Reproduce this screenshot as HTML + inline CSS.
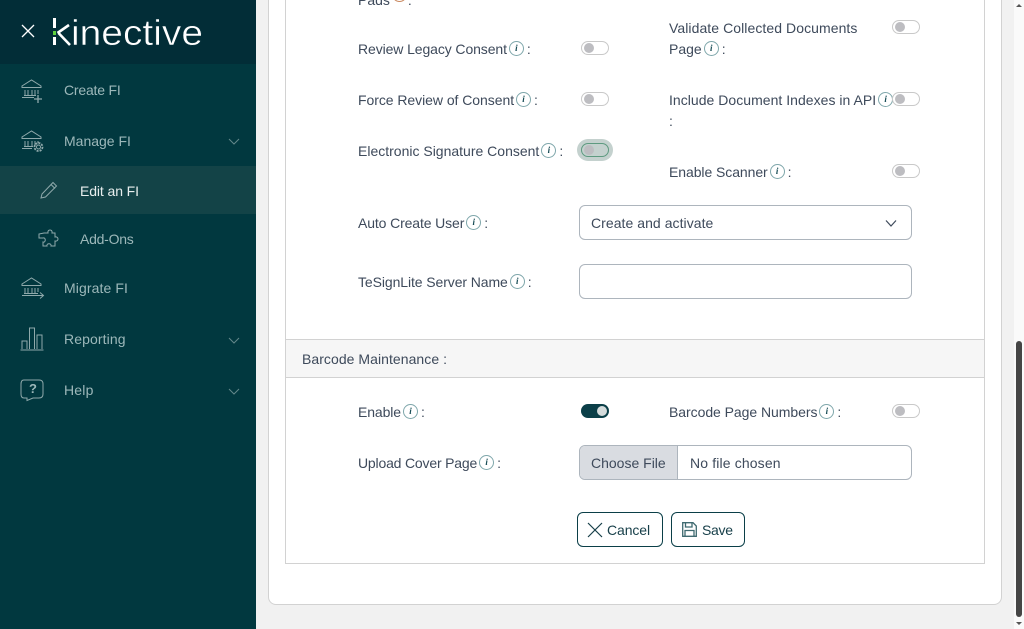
<!DOCTYPE html>
<html><head><meta charset="utf-8"><style>
*{box-sizing:border-box}
html,body{margin:0;padding:0;width:1024px;height:629px;overflow:hidden;background:#f1f1f1;font-family:"Liberation Sans",sans-serif}
.a{position:absolute}
#side{left:0;top:0;width:256px;height:629px;background:#01383f}
#head{left:0;top:0;width:256px;height:64px;background:#022d37}
#act{left:0;top:166px;width:256px;height:48px;background:#134347}
.m{position:absolute;font-size:14px;line-height:20px;color:#9db8ba;white-space:nowrap}
.t{position:absolute;font-size:14px;line-height:20px;color:#3e4a5b;white-space:nowrap}
.i{display:inline-block;position:relative;top:-2px;width:15px;height:15px;border:1px solid #7fa7ab;border-radius:50%;font:italic bold 9px/13px "Liberation Serif",serif;letter-spacing:0;color:#174c55;text-align:center;vertical-align:1px;margin:0 3px 0 2px}
.s{position:absolute;width:28px;height:14px;border:1px solid #c9c9c9;border-radius:7px;background:#fff}
.s:after{content:"";position:absolute;left:2px;top:1px;width:10px;height:10px;border-radius:50%;background:#bdbdc1}
.box{position:absolute;left:579px;width:333px;height:35px;border:1px solid #adb5bd;border-radius:6px;background:#fff}
.b{position:absolute;top:512px;height:35px;border:1px solid #0b3f48;border-radius:6px;background:#fff;font-size:14px;line-height:33px;color:#173f49}
svg{position:absolute;overflow:visible}
svg.ic *{fill:none;stroke:#8fa9ab;stroke-width:1}
</style></head><body>
<div class="a" id="side"></div><div class="a" id="head"></div><div class="a" id="act"></div>
<svg style="left:0;top:0" width="256" height="64">
<path d="M22 25L34 37M34 25L22 37" stroke="#fff" stroke-width="1.300" fill="none"/>
<text x="71" y="45" font-family="Liberation Sans" font-size="36" fill="#fff" stroke="#022d37" stroke-width=".5" textLength="132" lengthAdjust="spacingAndGlyphs">inective</text>
<rect x="53" y="18" width="3" height="10" fill="#fff"/><rect x="53" y="31" width="3" height="4" fill="#5fd13e"/><rect x="53" y="37" width="3" height="8" fill="#fff"/>
<path d="M57.500 33L69 25M58.500 33L70 45" stroke="#fff" stroke-width="2.600" fill="none"/>
</svg>
<svg class="ic" style="left:0;top:0" width="256" height="420">
<path d="M22 86L31.500 80L41 86V87.500H22ZM25 90V95M28 90V95M32 90V95M35 90V95M38 90V94M24 95.500H36M22 97.500H34"/><path d="M38 95V103M34 99H42" style="stroke-width:1.300"/>
<path d="M22 137L31.500 131L41 137V138.500H22ZM25 141V146M28 141V146M32 141V146M35 141V146M38 141V143M24 146.500H33M22 148.500H32"/><circle cx="38.500" cy="147" r="2"/><circle cx="38.500" cy="147" r="4" stroke-dasharray="2 1.100" style="stroke-width:1.800"/>
<path d="M42 194L53 182.500L56.500 186L45.500 197L41 198ZM51 184.500L55 188.500"/>
<path d="M44 233H48C47 229 53 229 52 233H55V237C59 236 59 242 55 241V246H51C52 243 46 243 47 246H43V242C46 243 46 237 43 238H39V234Z" transform="translate(0 0)"/>
<path d="M22 284L31.500 278L41 284V285.500H22ZM25 288V293M28 288V293M32 288V293M35 288V293M38 288V292M24 293.500H38M22 295.500H43M40 292.500L43.500 295.500L40 298.500"/>
<path d="M22 349V341H27V349M29.500 349V328H34.500V349M37 349V335H42V349M20.500 350H43.500"/>
<path d="M24 380H39Q43 380 43 384V394Q43 398 39 398H33L27 400.500V398H24Q21 398 21 394V384Q21 380 24 380Z"/>
<path d="M229 139L234 144L239 139M229 338L234 343L239 338M229 389L234 394L239 389" opacity=".7"/>
</svg>
<span class="a" style="left:29px;top:381px;font-size:13px;font-weight:bold;color:#9db8ba;line-height:15px">?</span>
<span class="m" style="left:64px;top:80px;letter-spacing:-.2px">Create FI</span>
<span class="m" style="left:64px;top:131px">Manage FI</span>
<span class="m" style="left:80px;top:181px;color:#e8eeee;letter-spacing:-.1px">Edit an FI</span>
<span class="m" style="left:80px;top:229px;letter-spacing:-.25px">Add-Ons</span>
<span class="m" style="left:64px;top:278px;letter-spacing:.1px">Migrate FI</span>
<span class="m" style="left:64px;top:329px;letter-spacing:.1px">Reporting</span>
<span class="m" style="left:64px;top:380px;letter-spacing:.2px">Help</span>

<div class="a" style="left:268px;top:-20px;width:734px;height:625px;background:#fff;border:1px solid #d2d2d2;border-radius:8px"></div>
<div class="a" style="left:285px;top:-20px;width:700px;height:584px;border:1px solid #d2d2d2;background:#fff"></div>
<div class="a" style="left:285px;top:339px;width:700px;height:39px;border:1px solid #d2d2d2;border-width:1px;background:#f6f6f6"></div>
<span class="t" style="left:302px;top:349px;letter-spacing:.05px">Barcode Maintenance :</span>

<span class="t" style="left:358px;top:-11px">Pads<span class="i" style="border-color:#c9885f;margin-right:1px"></span>:</span>
<span class="t" style="left:358px;top:39px;letter-spacing:-.1px">Review Legacy Consent<span class="i">i</span>:</span>
<span class="t" style="left:358px;top:90px;letter-spacing:-.05px">Force Review of Consent<span class="i">i</span>:</span>
<span class="t" style="left:358px;top:141px">Electronic Signature Consent<span class="i">i</span>:</span>
<span class="t" style="left:358px;top:213px;letter-spacing:-.12px">Auto Create User<span class="i">i</span>:</span>
<span class="t" style="left:358px;top:272px;letter-spacing:-.09px">TeSignLite Server Name<span class="i">i</span>:</span>
<span class="t" style="left:358px;top:402px;letter-spacing:-.1px">Enable<span class="i">i</span>:</span>
<span class="t" style="left:358px;top:453px;letter-spacing:-.18px">Upload Cover Page<span class="i">i</span>:</span>

<span class="t" style="left:669px;top:18px;letter-spacing:.07px">Validate Collected Documents</span>
<span class="t" style="left:669px;top:39px">Page<span class="i">i</span>:</span>
<span class="t" style="left:669px;top:90px;letter-spacing:.03px">Include Document Indexes in API<span class="i" style="margin-right:0">i</span></span>
<span class="t" style="left:669px;top:111px">:</span>
<span class="t" style="left:669px;top:162px;letter-spacing:-.07px">Enable Scanner<span class="i">i</span>:</span>
<span class="t" style="left:669px;top:402px;letter-spacing:-.05px">Barcode Page Numbers<span class="i">i</span>:</span>

<div class="s" style="left:581px;top:41px"></div>
<div class="s" style="left:581px;top:92px"></div>
<div class="a" style="left:577px;top:139px;width:36px;height:22px;border-radius:11px;background:#c4d1ce"></div>
<div class="s" style="left:581px;top:143px;background:#c4d1ce;border-color:#5e9a80"></div>
<div class="s" style="left:892px;top:20px"></div>
<div class="s" style="left:892px;top:92px"></div>
<div class="s" style="left:892px;top:164px"></div>
<div class="s" style="left:892px;top:404px"></div>
<div class="a" style="left:581px;top:404px;width:28px;height:14px;border-radius:7px;background:#0b3f48"></div>
<div class="a" style="left:597px;top:406px;width:10px;height:10px;border-radius:50%;background:#d5dcdc"></div>

<div class="box" style="top:205px"><span class="t" style="left:11px;top:7px;letter-spacing:.05px">Create and activate</span></div>
<svg style="left:885px;top:219px" width="14" height="10"><path d="M1 1.500L6 7L11 1.500" stroke="#3e4a5b" stroke-width="1.200" fill="none"/></svg>
<div class="box" style="top:264px"></div>
<div class="box" style="top:445px;overflow:hidden">
<div class="a" style="left:0;top:0;width:98px;height:33px;background:#d9dce1;border-right:1px solid #adb5bd"></div>
<span class="t" style="left:11px;top:7px">Choose File</span>
<span class="t" style="left:110px;top:7px;letter-spacing:.14px">No file chosen</span></div>

<div class="b" style="left:577px;width:86px"><span class="a" style="left:29px;top:1px;letter-spacing:-.1px">Cancel</span></div>
<svg style="left:587px;top:522px" width="16" height="16"><path d="M1 1L15 15M15 1L1 15" stroke="#173f49" stroke-width="1.200"/></svg>
<div class="b" style="left:671px;width:74px"><span class="a" style="left:30px;top:1px;letter-spacing:-.3px">Save</span></div>
<svg style="left:682px;top:522px" width="15" height="15"><path d="M.700.700H11L14.300 4V14.300H.700ZM3.500.700V5H10V.700M3 14.300V8.500H12V14.300" stroke="#3f6a70" stroke-width="1.300" fill="none"/></svg>

<div class="a" style="left:1014px;top:0;width:10px;height:629px;background:#fafafa"></div>
<div class="a" style="left:1016px;top:341px;width:6px;height:276px;border-radius:3px;background:#454545"></div>
<svg style="left:1014px;top:0" width="10" height="629"><path d="M2 7L5 4L8 7ZM2 622L5 625L8 622Z" fill="#555"/></svg>
</body></html>
